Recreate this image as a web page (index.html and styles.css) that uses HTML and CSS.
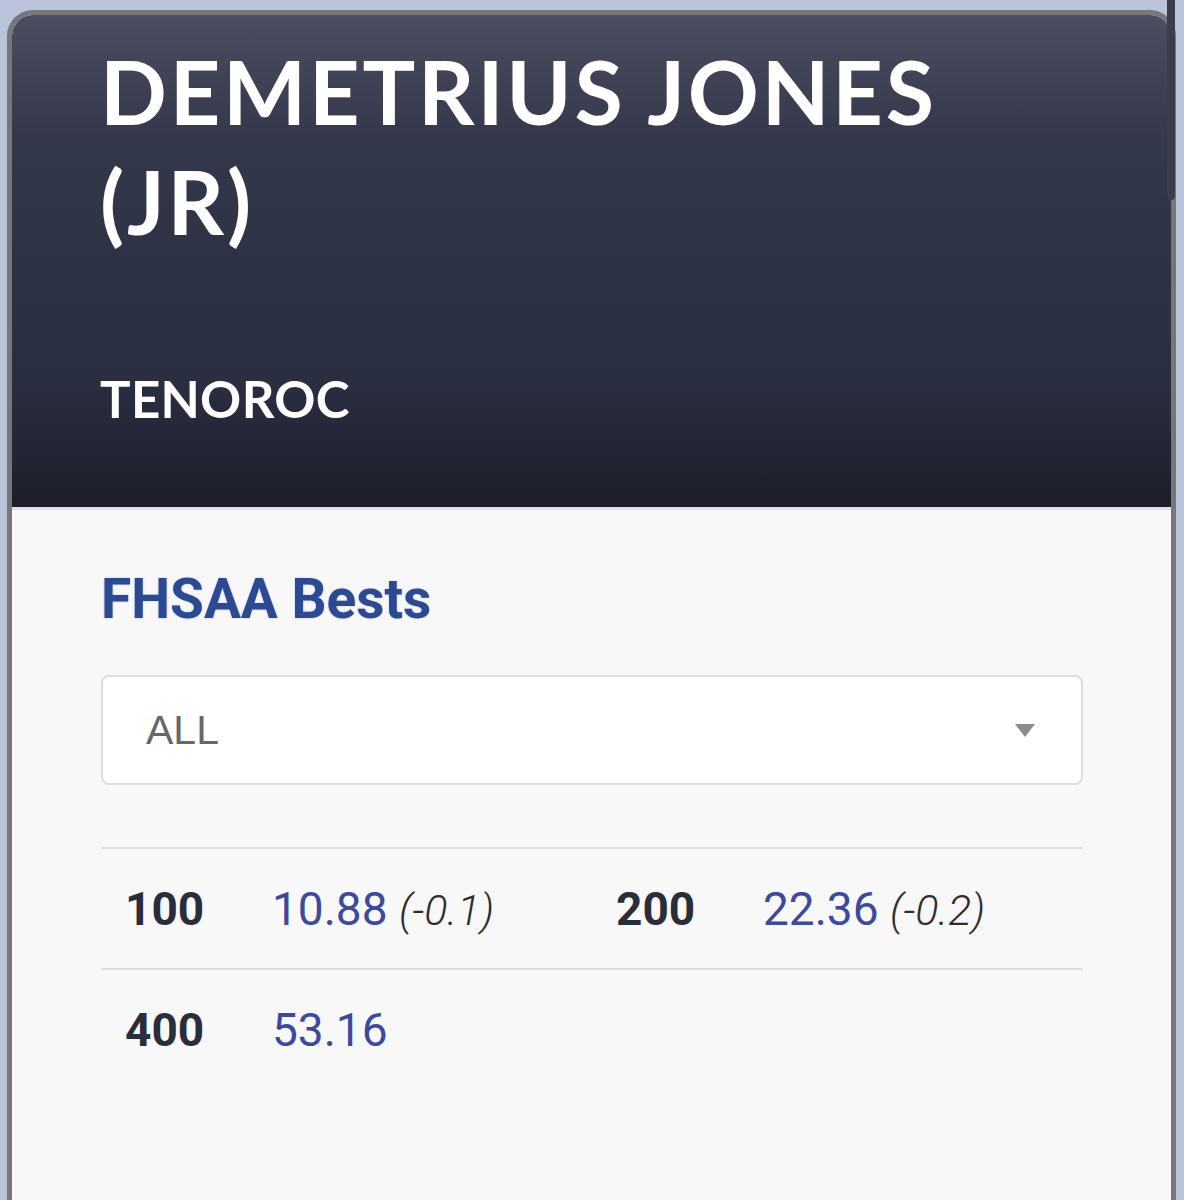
FILE: index.html
```html
<!DOCTYPE html>
<html lang="en">
<head>
    <meta charset="UTF-8">
    <meta name="viewport" content="width=device-width, initial-scale=1.0">
    <title>Demetrius Jones (JR) - Tenoroc</title>
    <link rel="stylesheet" href="styles.css">
</head>
<body>
    <div class="scroll-thumb"></div>

    <div class="card">
        <header class="athlete-head">
            <h1 class="athlete-name">DEMETRIUS JONES (JR)</h1>
            <p class="athlete-school">TENOROC</p>
        </header>

        <section class="bests">
            <h2 class="bests-title">FHSAA Bests</h2>

            <div class="select-box">
                <span class="select-value">ALL</span>
                <span class="select-arrow"></span>
            </div>

            <div class="marks">
                <div class="mark-row">
                    <div class="mark">
                        <span class="event">100</span>
                        <span class="time">10.88 <em class="wind">(-0.1)</em></span>
                    </div>
                    <div class="mark">
                        <span class="event">200</span>
                        <span class="time">22.36 <em class="wind">(-0.2)</em></span>
                    </div>
                </div>
                <div class="mark-row">
                    <div class="mark">
                        <span class="event">400</span>
                        <span class="time">53.16</span>
                    </div>
                </div>
            </div>
        </section>
    </div>
</body>
</html>
```

FILE: styles.css
```css
* {
    margin: 0;
    padding: 0;
    box-sizing: border-box;
}

body {
    font-family: Roboto, "Liberation Sans", Arial, sans-serif;
    background-color: #b9c3da;
    color: #2a2d3a;
    padding: 10px 8px 0 7px;
    height: 1200px;
    overflow: hidden;
    position: relative;
}

/* thin scroll indicator on the right */
.scroll-thumb {
    position: absolute;
    top: 0;
    right: 9px;
    width: 8px;
    height: 200px;
    background-color: #3b3e4a;
    border-radius: 0 0 4px 4px;
    z-index: 2;
}

.card {
    border: 5px solid #76777b;
    border-bottom: none;
    border-radius: 26px 26px 0 0;
    overflow: hidden;
    height: 1190px;
    background-color: #f8f8f9;
}

/* 選手標頭 */
.athlete-head {
    background: linear-gradient(#4b4e60 0%, #34384b 25%, #2c3144 55%, #2a2e41 75%, #1c1e29 100%);
    color: #fff;
    padding: 21px 88px 0 88px;
    height: 492px;
    font-family: Lato, "Noto Sans", sans-serif;
}

.athlete-name {
    font-size: 88px;
    font-weight: 700;
    line-height: 110px;
    letter-spacing: 2.8px;
    max-width: 950px;
}

.athlete-school {
    font-size: 51px;
    font-weight: 700;
    margin-top: 112px;
    letter-spacing: 0.3px;
}

/* 成績區 */
.bests {
    border-top: 3px solid #e0e1e6;
    padding: 56px 88px 0 89px;
}

.bests-title {
    color: #2c4a93;
    font-size: 55px;
    font-weight: 700;
    line-height: 66px;
    text-shadow: 0 0 2px rgba(44, 74, 147, 0.3);
}

.select-box {
    margin-top: 43px;
    height: 110px;
    background-color: #fff;
    border: 2px solid #dedede;
    border-radius: 8px;
    display: flex;
    align-items: center;
    justify-content: space-between;
    padding: 0 46px 0 43px;
}

.select-value {
    font-size: 41px;
    color: #676767;
    font-family: "Liberation Sans", Arial, sans-serif;
}

.select-arrow {
    width: 0;
    height: 0;
    border-left: 10px solid transparent;
    border-right: 10px solid transparent;
    border-top: 13px solid #8a8c90;
}

.marks {
    margin-top: 62px;
}

.mark-row {
    display: flex;
    border-top: 2px solid #dfdfe1;
    height: 121px;
    align-items: center;
}

.mark {
    display: flex;
    width: 491px;
    padding-left: 24px;
}

.event {
    width: 147px;
    font-size: 46px;
    font-weight: 700;
    color: #2a2d3a;
}

.time {
    font-size: 46px;
    color: #3b4a9e;
}

.wind {
    font-size: 43px;
    font-weight: 300;
    color: #2e2e2e;
}
```
